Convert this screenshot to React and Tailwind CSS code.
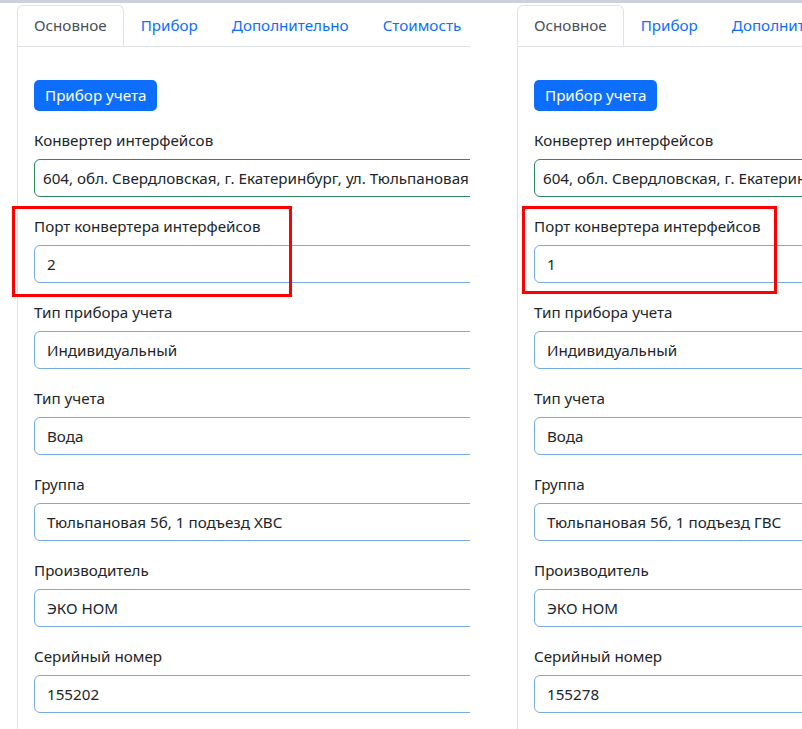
import React from "react";

const font = { fontFamily: '"Noto Sans", "Segoe UI", sans-serif' };

function Field({ label, value, green }) {
  return (
    <div className="mt-[17px]">
      <div className="h-[24px] leading-[24px] text-[#212529] whitespace-nowrap">{label}</div>
      <div
        className={
          "mt-[7px] h-[38px] w-[900px] rounded-[6px] border bg-white flex items-center whitespace-nowrap text-[#212529] " +
          (green ? "border-[#2a8a5c] pl-[8px]" : "border-[#76ace6] pl-[12px]")
        }
      >
        {value}
      </div>
    </div>
  );
}

function Panel({ port, group, serial }) {
  const tabs = ["Прибор", "Дополнительно", "Стоимость"];
  return (
    <div className="flex flex-col h-full">
      <div className="flex mt-[2px] border-b border-[#dee2e6] whitespace-nowrap">
        <div className="h-[41px] -mb-px px-4 flex items-center border border-[#dee2e6] border-b-white bg-white rounded-t-[6px] text-[#495057]">
          Основное
        </div>
        {tabs.map((t) => (
          <div key={t} className="h-[41px] px-4 flex items-center border border-transparent text-[#0d6efd]">
            {t}
          </div>
        ))}
      </div>
      <div className="flex-1 border-l border-[#dee2e6] pl-4 pt-[33px]">
        <div className="inline-flex h-[31px] items-center px-[11px] rounded-[5px] bg-[#0d6efd] text-white">
          Прибор учета
        </div>
        <Field label="Конвертер интерфейсов" value="604, обл. Свердловская, г. Екатеринбург, ул. Тюльпановая 5б" green />
        <Field label="Порт конвертера интерфейсов" value={port} />
        <Field label="Тип прибора учета" value="Индивидуальный" />
        <Field label="Тип учета" value="Вода" />
        <Field label="Группа" value={group} />
        <Field label="Производитель" value="ЭКО НОМ" />
        <Field label="Серийный номер" value={serial} />
      </div>
    </div>
  );
}

export default function App() {
  return (
    <div className="relative w-[802px] h-[729px] overflow-hidden bg-white text-[15.2px]" style={font}>
      <div className="h-[3px] bg-[#cbd2dd]" />
      <div className="flex h-[726px]">
        <div className="ml-[17px] w-[453px] overflow-hidden">
          <Panel port="2" group="Тюльпановая 5б, 1 подъезд ХВС" serial="155202" />
        </div>
        <div className="ml-[47px] flex-1 overflow-hidden">
          <Panel port="1" group="Тюльпановая 5б, 1 подъезд ГВС" serial="155278" />
        </div>
      </div>
      <div className="absolute left-[12px] top-[206px] w-[280px] h-[91px] border-[3px] border-[#ff0000]" />
      <div className="absolute left-[522px] top-[206px] w-[255px] h-[88px] border-[3px] border-[#ff0000]" />
    </div>
  );
}
